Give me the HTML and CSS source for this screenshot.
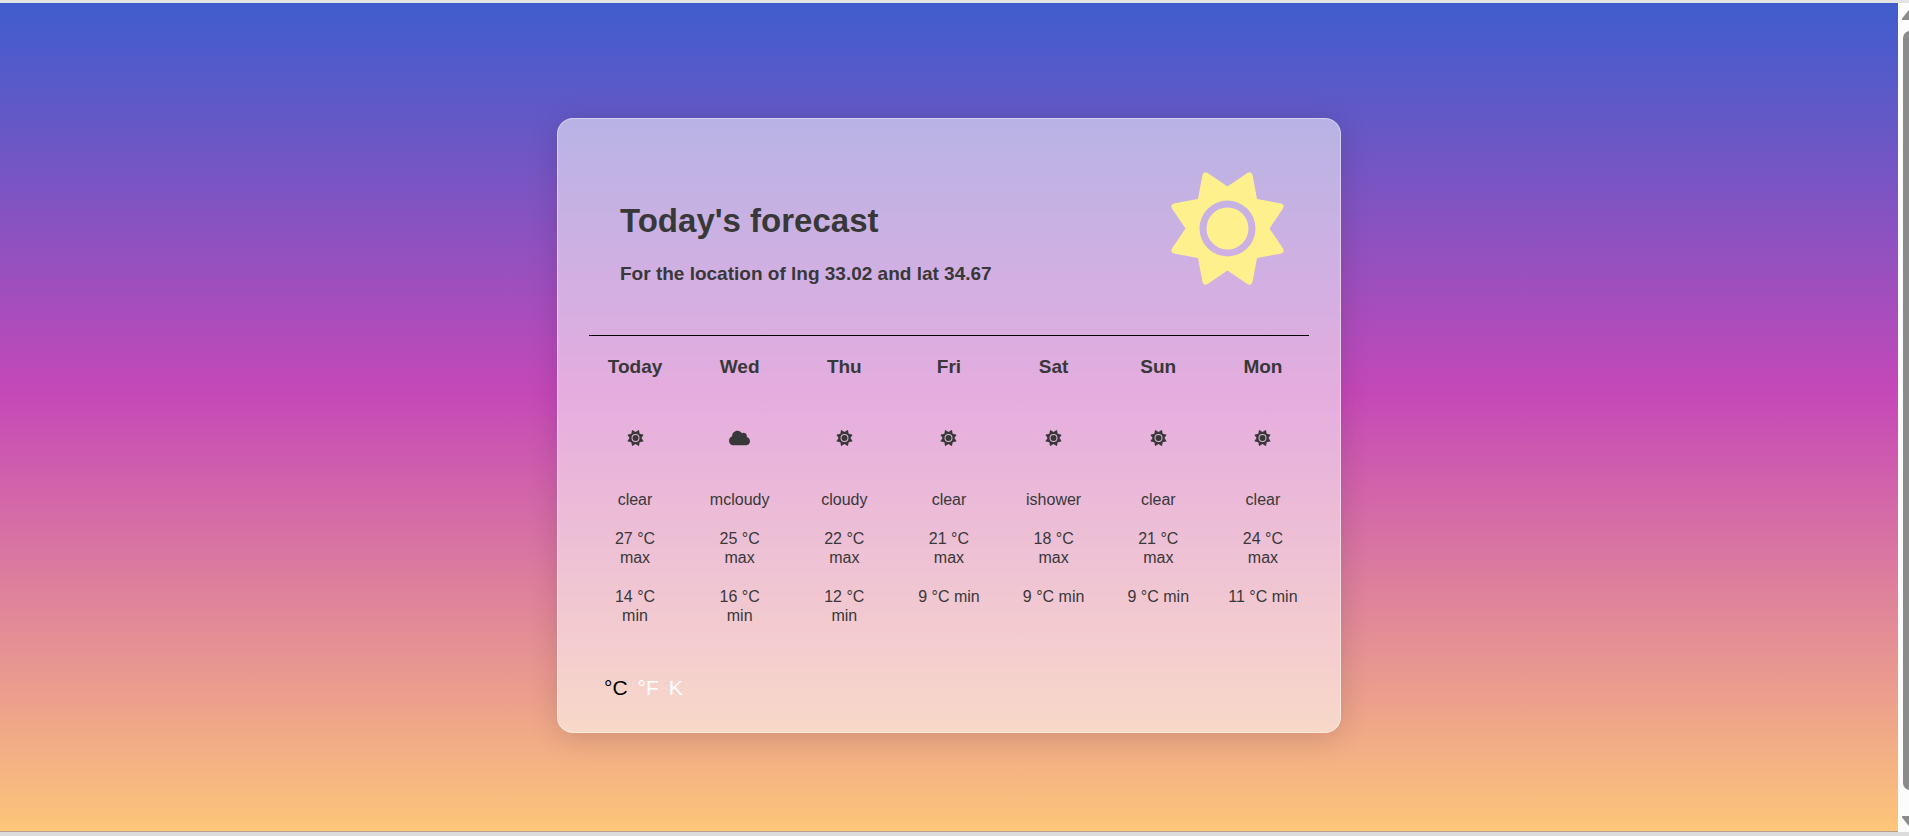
FILE: index.html
```html
<!DOCTYPE html>
<html lang="en">
<head>
<meta charset="utf-8">
<title>Today's forecast</title>
<link rel="stylesheet" href="styles.css">
</head>
<body>
<svg class="sprite" aria-hidden="true">
  <symbol id="sun" viewBox="-56.5 -56.5 113 113"><path fill-rule="evenodd" d="M0-42L19.500-55.200Q24-58 25.200-52.500L29.500-29.500L52.500-25.200Q58-24 55.200-19.500L42 0L55.200 19.500Q58 24 52.500 25.200L29.500 29.500L25.200 52.500Q24 58 19.500 55.200L0 42L-19.500 55.200Q-24 58-25.200 52.500L-29.500 29.500L-52.500 25.200Q-58 24-55.200 19.500L-42 0L-55.200-19.500Q-58-24-52.500-25.200L-29.500-29.500L-25.200-52.500Q-24-58-19.500-55.200ZM-28 0a28 28 0 1 0 56 0a28 28 0 1 0-56 0Z"/><circle r="21"/></symbol>
  <symbol id="cloud" viewBox="0 32 640 448"><path d="M537.600 226.600c4.100-10.700 6.400-22.400 6.400-34.600 0-53-43-96-96-96-19.700 0-38.100 6-53.300 16.200C367 64.200 315.300 32 256 32c-88.400 0-160 71.600-160 160 0 2.700.1 5.400.2 8.100C40.200 219.800 0 273.200 0 336c0 79.500 64.500 144 144 144h368c70.700 0 128-57.300 128-128 0-61.900-44-113.600-102.400-125.400z"/></symbol>
</svg>
<div class="window">
  <main class="page">
    <section class="card">
      <header class="head">
        <div class="intro">
          <h1>Today's forecast</h1>
          <h2>For the location of lng 33.02 and lat 34.67</h2>
        </div>
        <svg class="hero" role="img" aria-label="clear"><use href="#sun"/></svg>
      </header>
      <ul class="days">
        <li class="day"><h3>Today</h3><svg class="icon" aria-hidden="true"><use href="#sun"/></svg><p>clear</p><p>27 °C max</p><p>14 °C min</p></li>
        <li class="day"><h3>Wed</h3><svg class="icon" aria-hidden="true"><use href="#cloud"/></svg><p>mcloudy</p><p>25 °C max</p><p>16 °C min</p></li>
        <li class="day"><h3>Thu</h3><svg class="icon" aria-hidden="true"><use href="#sun"/></svg><p>cloudy</p><p>22 °C max</p><p>12 °C min</p></li>
        <li class="day"><h3>Fri</h3><svg class="icon" aria-hidden="true"><use href="#sun"/></svg><p>clear</p><p>21 °C max</p><p>9 °C min</p></li>
        <li class="day"><h3>Sat</h3><svg class="icon" aria-hidden="true"><use href="#sun"/></svg><p>ishower</p><p>18 °C max</p><p>9 °C min</p></li>
        <li class="day"><h3>Sun</h3><svg class="icon" aria-hidden="true"><use href="#sun"/></svg><p>clear</p><p>21 °C max</p><p>9 °C min</p></li>
        <li class="day"><h3>Mon</h3><svg class="icon" aria-hidden="true"><use href="#sun"/></svg><p>clear</p><p>24 °C max</p><p>11 °C min</p></li>
      </ul>
      <div class="units" role="group" aria-label="Temperature unit">
        <button type="button" class="unit active" aria-pressed="true">°C</button>
        <button type="button" class="unit" aria-pressed="false">°F</button>
        <button type="button" class="unit" aria-pressed="false">K</button>
      </div>
    </section>
  </main>
  <div class="scrollbar" aria-hidden="true">
    <svg class="arrow" viewBox="0 0 14 10"><path d="M1 10 Q-1 10 .5 8 L6 1 Q7 -.5 8 1 L14 8 V10Z"/></svg>
    <div class="thumb"></div>
    <svg class="arrow" viewBox="0 0 14 10"><path d="M1 0 Q-1 0 .5 2 L6 9 Q7 10.500 8 9 L14 2 V0Z"/></svg>
  </div>
</div>
</body>
</html>
```
FILE: styles.css
```css
* {
  box-sizing: border-box;
}

body {
  margin: 0;
  font-family: Arial, "Liberation Sans", sans-serif;
  font-size: 16px;
  line-height: 19px;
  color: #383838;
}

h1, h2, h3, p, ul {
  margin: 0;
  padding: 0;
}

.sprite {
  position: absolute;
  width: 0;
  height: 0;
}

.window {
  display: flex;
  min-height: 100vh;
  border-top: 3px solid #e3e5e4;
  border-bottom: 4px solid #dcdcdc;
}

.page {
  flex: 1;
  display: flex;
  justify-content: center;
  align-items: flex-start;
  padding: 115px 24px 96px;
  background: linear-gradient(#405dcd, #6658c6 15%, #c548b8 47%, #fdc679);
  box-shadow: inset 0 -1px #b5a08a;
}

.card {
  width: 784px;
  max-width: 100%;
  padding: 31px;
  border: 1px solid rgba(255, 255, 255, 0.4);
  border-radius: 16px;
  background: rgba(255, 255, 255, 0.55);
  box-shadow: 0 4px 30px rgba(0, 0, 0, 0.15);
}

.head {
  display: flex;
  justify-content: space-between;
  align-items: flex-start;
  height: 186px;
  padding: 22px 25px 0 31px;
  border-bottom: 1px solid #000;
}

.intro {
  padding-top: 28px;
}

h1 {
  font-size: 33px;
  line-height: 42px;
}

h2 {
  margin-top: 20px;
  font-size: 19px;
  line-height: 23px;
}

.hero {
  width: 113px;
  height: 113px;
  fill: #fef18d;
}

.days {
  display: flex;
  justify-content: space-between;
  list-style: none;
}

.day {
  display: flex;
  flex-direction: column;
  align-items: center;
  width: 92px;
  padding: 19px 11px 0;
  text-align: center;
}

h3 {
  font-size: 19px;
  line-height: 23px;
}

.icon {
  width: 21px;
  height: 16px;
  margin: 52px 0 24px;
  fill: #383838;
}

.day p {
  margin-top: 20px;
}

.units {
  display: flex;
  gap: 10px;
  padding: 51px 15px 1px;
}

.unit {
  padding: 0;
  border: 0;
  background: none;
  color: #fff;
  font: 21px/24px Arial, "Liberation Sans", sans-serif;
  cursor: pointer;
}

.unit.active {
  color: #000;
}

.scrollbar {
  display: flex;
  flex-direction: column;
  width: 11px;
  padding: 7px 0 6px 4px;
  overflow: hidden;
  background: #fcfcfc;
}

.arrow {
  flex: none;
  width: 14px;
  height: 10px;
  fill: #8b8b8b;
}

.thumb {
  flex: 1;
  width: 14px;
  margin: 11px 0 26px 1px;
  border-radius: 7px;
  background: #8b8b8b;
}
```
